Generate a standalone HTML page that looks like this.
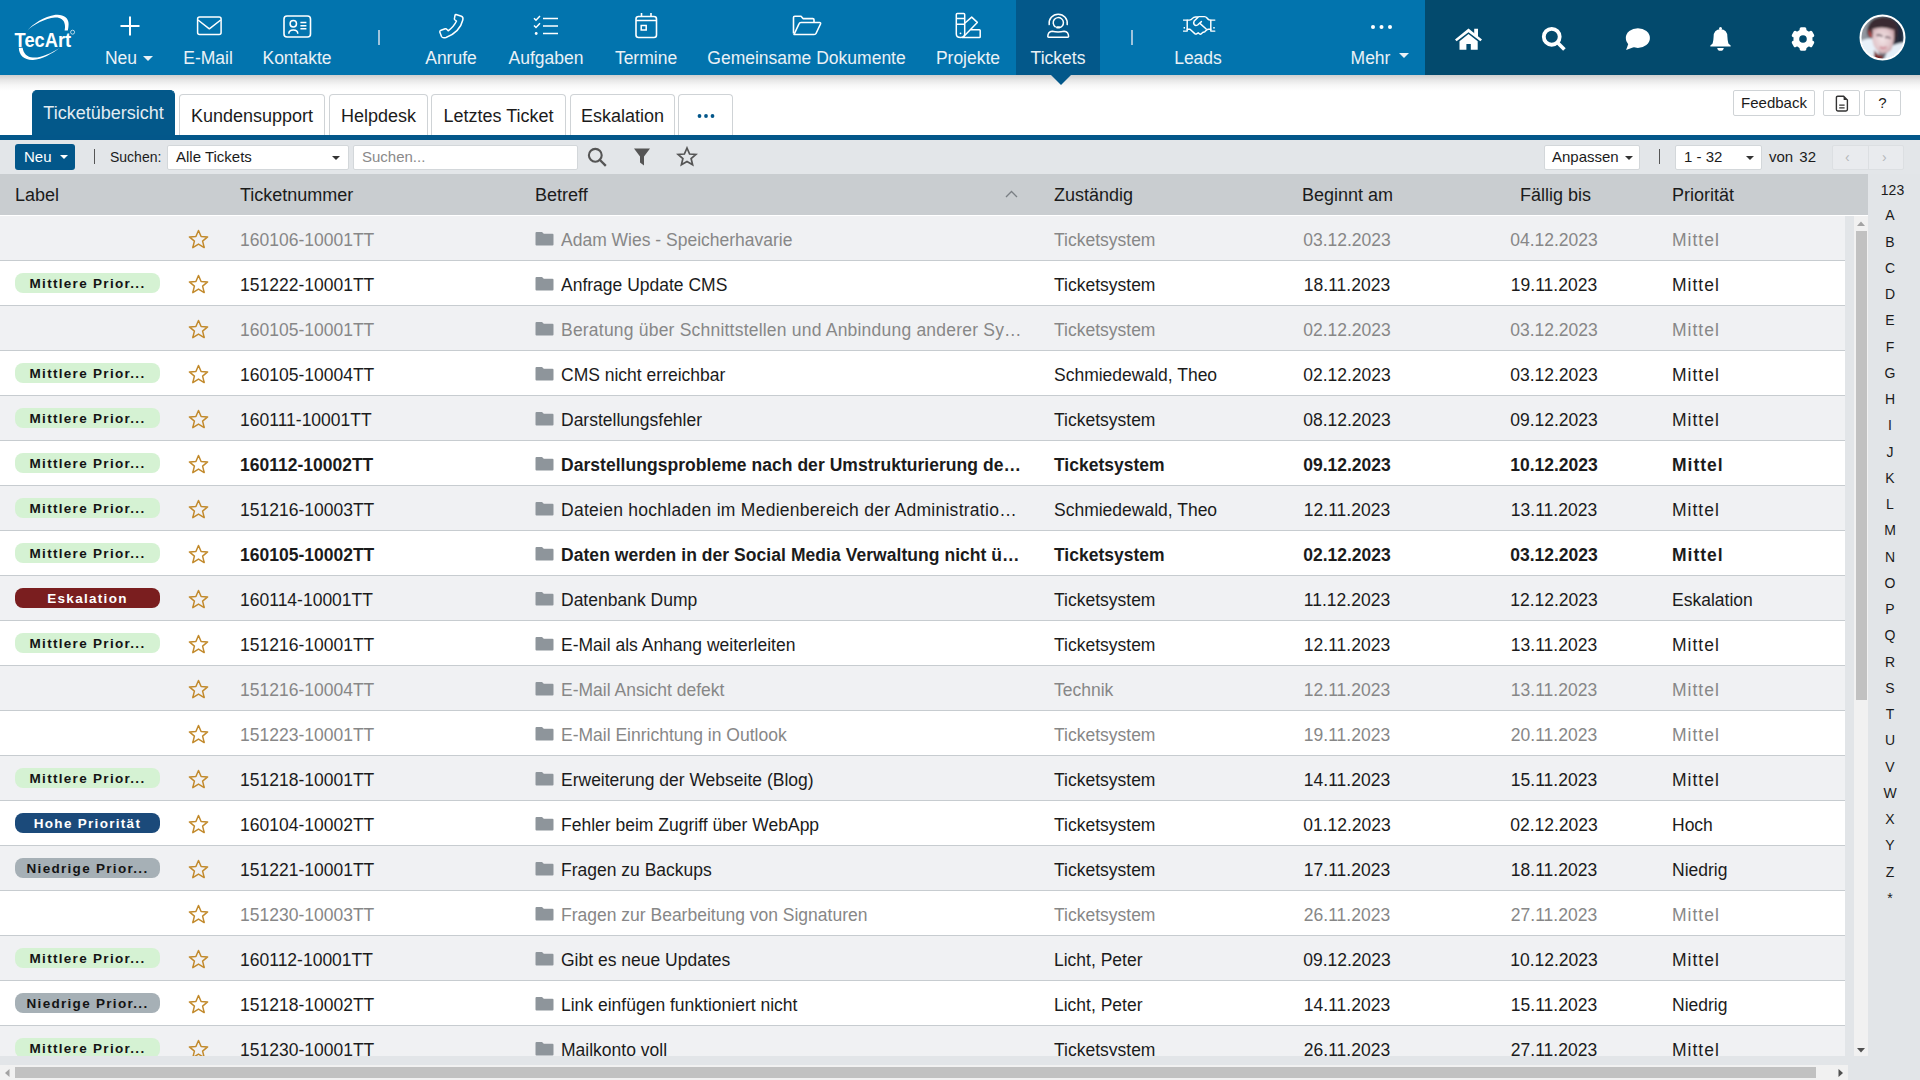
<!DOCTYPE html>
<html><head><meta charset="utf-8">
<style>
*{box-sizing:border-box;margin:0;padding:0}
html,body{width:1920px;height:1080px;overflow:hidden;background:#fff;font-family:"Liberation Sans",sans-serif;color:#1b1b1b}
.abs{position:absolute}
#nav{position:absolute;left:0;top:0;width:1920px;height:75px;background:#0274ae}
#navr{position:absolute;left:1425px;top:0;width:495px;height:75px;background:#034a6d}
#act{position:absolute;left:1016px;top:0;width:84px;height:75px;background:#03588a}
#actarr{position:absolute;left:1051px;top:75px;width:0;height:0;border-left:10px solid transparent;border-right:10px solid transparent;border-top:10px solid #03588a;z-index:3}
#shadow{position:absolute;left:0;top:75px;width:1920px;height:16px;background:linear-gradient(#cfcfcf,#e6e6e6 30%,#f7f7f7 65%,rgba(255,255,255,0));}
.ni{position:absolute;top:0;height:75px;text-align:center;color:#eaf1f6}
.ni .lb{position:absolute;left:-20px;right:-20px;top:48px;font-size:17.5px;line-height:20px;white-space:nowrap}
.ni svg{position:absolute;left:50%;top:0}
.caret{display:inline-block;width:0;height:0;border-left:5px solid transparent;border-right:5px solid transparent;border-top:5px solid currentColor;vertical-align:middle;margin-left:6px;position:relative;top:-1px}
.sep{position:absolute;width:2px;background:#9fc4dc}
/* tabs */
.tab{position:absolute;top:94px;height:41px;border:1px solid #cfd3d6;border-bottom:none;border-radius:4px 4px 0 0;background:#fff;font-size:18px;line-height:42px;text-align:center;color:#1b1b1b;white-space:nowrap}
.tab.active{top:90px;height:45px;background:#03588a;border-color:#03588a;color:#e2ecf2;line-height:44px;border-radius:5px 5px 0 0}
#bline{position:absolute;left:0;top:135px;width:1920px;height:5px;background:#03578a}
.btn{position:absolute;top:90px;height:26px;border:1px solid #cfd3d6;border-radius:2px;background:#fff;font-size:15px;line-height:24px;text-align:center;color:#1b1b1b}
/* toolbar */
#tb{position:absolute;left:0;top:140px;width:1920px;height:34px;background:#e3e6e9}
.tbt{position:absolute;font-size:14px;line-height:20px;white-space:nowrap;color:#1b1b1b}
.sel{position:absolute;top:145px;height:25px;background:#fff;border:1px solid #d3d7da;border-radius:2px;font-size:15px;line-height:22px;padding-left:8px;color:#1b1b1b;white-space:nowrap}
.sel .caret{position:absolute;right:8px;top:10px;margin:0;border-left-width:4.5px;border-right-width:4.5px;border-top-width:4.5px;color:#333}
/* header */
#th{position:absolute;left:0;top:174px;width:1868px;height:41px;background:#c9cdd0}
.hc{position:absolute;top:185px;font-size:18px;line-height:21px;white-space:nowrap;color:#1b1b1b}
#hwhite{position:absolute;left:0;top:215px;width:1868px;height:1px;background:#fff}
#alpha{position:absolute;left:1868px;top:174px;width:52px;height:906px;background:#e2e5e8}
.al{position:absolute;left:1868px;width:50px;height:20px;margin-top:-10px;text-align:center;font-size:14px;line-height:20px;color:#1b1b1b}
#gapv{position:absolute;left:1845px;top:216px;width:9px;height:849px;background:#e2e5e8}
#vtrack{position:absolute;left:1854px;top:216px;width:14px;height:843px;background:#f1f1f1}
#vthumb{position:absolute;left:1856px;top:231px;width:11px;height:469px;background:#c1c1c1}
#gaph{position:absolute;left:0;top:1056px;width:1845px;height:9px;background:#e2e5e8}
#htrack{position:absolute;left:0;top:1065px;width:1848px;height:15px;background:#f1f1f1}
#hthumb{position:absolute;left:15px;top:1067px;width:1801px;height:11px;background:#c1c1c1}
/* rows */
#rows{position:absolute;left:0;top:0;width:1845px;height:1056px;overflow:hidden}
.row{position:absolute;left:0;width:1845px;height:45px;border-bottom:1px solid #c7ccd0}
.row.odd{background:#f0f1f3}
.row.even{background:#fff}
.row .c{position:absolute;top:1.5px;height:44px;line-height:44px;font-size:17.5px;white-space:nowrap;color:#1b1b1b}
.row.g .c{color:#878787}
.row.b .c{font-weight:bold}
.c.num{left:240px}
.c.sub{left:561px;width:480px;overflow:hidden}
.c.zu{left:1054px}
.c.beg{left:1297px;width:100px;text-align:center}
.c.fal{left:1504px;width:100px;text-align:center}
.c.prio{left:1672px}
.star{position:absolute;left:188px;top:13px}
.fold{position:absolute;left:535px;top:15px}
.pill{position:absolute;left:15px;top:12px;width:145px;height:20px;border-radius:8px;font-size:13.5px;font-weight:bold;letter-spacing:1.3px;line-height:21px;text-align:center;white-space:nowrap}
.pm{background:#d5f2d3;color:#141414}
.pe{background:#7a1e1f;color:#fff}
.ph{background:#1b4a7a;color:#fff}
.pl{background:#a6b0b6;color:#141414}
</style></head><body>
<div id="nav"></div>
<div id="navr"></div>
<div id="act"></div>
<div id="shadow"></div>
<div id="actarr"></div>

<!-- logo -->
<svg class="abs" style="left:0px;top:0px" width="90" height="75" viewBox="0 0 90 75">
 <path d="M27 30.8 C33 24 44 16.5 55.5 14.8 C63 14 68.8 17.5 68.6 24 C68.5 27 68.2 29 67.8 30.6 L64.6 30.6 C65 28.5 65.2 26.5 64.8 24.5 C64 19.5 60 17.3 55 17.6 C45 18.5 34 24.5 27 30.8 Z" fill="#fff"/>
 <path d="M18.8 47.8 L22.6 47.8 C23.5 53.5 27 57.3 33 57.6 C42 58 51 53 59.8 48 C52 53.5 42 59.5 33 60 C24.5 60.3 19 55.5 18.8 47.8 Z" fill="#fff"/>
 <text x="14.6" y="46.8" font-family="Liberation Sans" font-weight="bold" font-size="19.8" fill="#fff" textLength="56.5" lengthAdjust="spacingAndGlyphs">TecArt</text>
 <circle cx="72.6" cy="32.2" r="2" fill="none" stroke="#fff" stroke-width="0.7"/>
</svg>

<!-- nav items -->
<div class="ni" style="left:89px;width:80px">
 <svg width="22" height="22" style="margin-left:-10px;top:14.8px" viewBox="0 0 22 22"><path d="M11 1.5 V20.5 M1.5 11 H20.5" stroke="#fff" stroke-width="2" fill="none"/></svg>
 <div class="lb">Neu<span class="caret"></span></div>
</div>
<div class="ni" style="left:168px;width:80px">
 <svg width="28" height="22" style="margin-left:-12.5px;top:15px" viewBox="0 0 28 22"><rect x="1.6" y="1.9" width="23.5" height="17.5" rx="2" fill="none" stroke="#fff" stroke-width="1.5"/><path d="M2 5 L13.35 13.8 L24.7 5" fill="none" stroke="#fff" stroke-width="1.5" stroke-linejoin="round"/></svg>
 <div class="lb">E-Mail</div>
</div>
<div class="ni" style="left:247px;width:100px">
 <svg width="30" height="24" style="margin-left:-14px;top:15px" viewBox="0 0 30 24"><rect x="1" y="1" width="26.5" height="21" rx="3" fill="none" stroke="#fff" stroke-width="1.6"/><circle cx="10.3" cy="8.7" r="3.2" fill="none" stroke="#fff" stroke-width="1.5"/><path d="M5.8 18.8 C5.8 13.8 14.8 13.8 14.8 18.8" fill="none" stroke="#fff" stroke-width="1.5"/><path d="M17.4 7.6 H23.4 M17.4 10.7 H23.4 M17.4 13.8 H23.4" stroke="#fff" stroke-width="1.5"/></svg>
 <div class="lb">Kontakte</div>
</div>
<div class="sep" style="left:378px;top:30px;height:15px"></div>
<div class="ni" style="left:411px;width:80px">
 <svg width="28" height="28" style="margin-left:-13px;top:12px" viewBox="0 0 28 28"><path d="M18 2.5 L23.5 4.2 Q25.5 5 24.8 8 Q22 20 8 25.5 Q4.5 26.5 3.5 24.5 L1.8 20 Q1.5 19 3 18.3 L7.2 16.8 Q8.2 16.5 9 17.5 L10.2 18.8 Q16 14.5 18.5 9 L17 8 Q16 7.2 16.5 6 L17 3.5 Q17.3 2.3 18 2.5 Z" fill="none" stroke="#fff" stroke-width="1.5" stroke-linejoin="round"/></svg>
 <div class="lb">Anrufe</div>
</div>
<div class="ni" style="left:496px;width:100px">
 <svg width="28" height="24" style="margin-left:-13px;top:14.7px" viewBox="0 0 28 24"><path d="M1 3.2 L3 5.2 L7 1 M1 10.5 L3 12.5 L7 8.3" fill="none" stroke="#fff" stroke-width="1.5"/><circle cx="3.2" cy="18.5" r="1.4" fill="#fff"/><path d="M10 3.5 H25 M10 11 H25 M10 18.5 H25" stroke="#fff" stroke-width="1.6"/></svg>
 <div class="lb">Aufgaben</div>
</div>
<div class="ni" style="left:601px;width:90px">
 <svg width="24" height="28" style="margin-left:-12px;top:12px" viewBox="0 0 24 28"><rect x="2" y="4.5" width="20.5" height="21" rx="2.5" fill="none" stroke="#fff" stroke-width="1.6"/><path d="M2 8.5 H22.5 M7.5 1 V5 M17 1 V5" stroke="#fff" stroke-width="1.6" fill="none"/><rect x="7.2" y="13.5" width="5" height="4.5" fill="none" stroke="#fff" stroke-width="1.5"/></svg>
 <div class="lb">Termine</div>
</div>
<div class="ni" style="left:700px;width:213px">
 <svg width="32" height="22" style="margin-left:-15px;top:15px" viewBox="0 0 32 22"><path d="M1.5 18.5 V2.5 Q1.5 1.2 2.8 1.2 H9 L11 3.6 H20.8 Q22 3.6 22 4.8 V7.5" fill="none" stroke="#fff" stroke-width="1.6" stroke-linejoin="round"/><path d="M2 19.5 L7 8.8 Q7.5 7.5 9 7.5 H27.5 Q29 7.5 28.5 9 L24 18.5 Q23.5 19.5 22.2 19.5 Z" fill="none" stroke="#fff" stroke-width="1.6" stroke-linejoin="round"/></svg>
 <div class="lb">Gemeinsame Dokumente</div>
</div>
<div class="ni" style="left:923px;width:90px">
 <svg width="28" height="28" style="margin-left:-14px;top:12px" viewBox="0 0 28 28"><g fill="none" stroke="#fff" stroke-width="1.5" stroke-linejoin="round"><path d="M3.3 1.6 H9.7 Q10.7 1.6 10.7 2.6 V22 Q10.7 25.5 6.5 25.5 Q2.3 25.5 2.3 22 V2.6 Q2.3 1.6 3.3 1.6 Z"/><path d="M2.3 6.6 H10.7 M2.3 12.2 H10.7"/><path d="M10.7 11.2 L17.7 5.1 L23.3 10.4 L9.5 24.8"/><path d="M16.6 17.8 H25.4 Q26.2 17.8 26.2 18.6 V24.7 Q26.2 25.5 25.4 25.5 H8"/></g><circle cx="6.5" cy="21.3" r="0.9" fill="#fff"/></svg>
 <div class="lb">Projekte</div>
</div>
<div class="ni" style="left:1016px;width:84px">
 <svg width="26" height="28" style="margin-left:-13px;top:12px" viewBox="0 0 26 28"><g fill="none" stroke="#fff" stroke-width="1.5" stroke-linecap="round" stroke-linejoin="round"><path d="M4.2 12.6 A9.1 9.1 0 1 1 22.2 12.6"/><path d="M10.3 14.8 A5.1 5.1 0 1 1 17.2 14 L15.5 15.3"/><path d="M2.8 24.6 Q2.8 19.6 7.2 19.2 Q13 20.6 19.2 19.2 Q23.6 19.6 23.6 24.6 Q23.6 25.3 22.8 25.3 H3.6 Q2.8 25.3 2.8 24.6 Z"/></g><rect x="11" y="14.3" width="4.4" height="2.2" rx="1.1" fill="#fff"/></svg>
 <div class="lb">Tickets</div>
</div>
<div class="sep" style="left:1130.5px;top:30px;height:15px"></div>
<div class="ni" style="left:1158px;width:80px">
 <svg width="34" height="22" style="margin-left:-15px;top:15px" viewBox="0 0 34 22"><g fill="none" stroke="#fff" stroke-width="1.45" stroke-linejoin="round" stroke-linecap="round"><path d="M0.6 5.1 H6.4 Q8.2 5.1 9.5 3.4 Q10.6 1.9 12.5 1.9 H15.2"/><path d="M4.2 5.1 V16.1 M0.6 16.1 H4.2"/><path d="M4.2 14.2 H7 L11.8 18.6 Q12.8 19.4 14 18.6 L15.2 17.8 L16.6 19 Q17.6 19.6 18.6 18.6 L20 17.2 Q21 17.4 22 16.6 L23.6 15 Q24.4 14.2 25.6 14.2 H27.8"/><path d="M15.8 1.6 H21.5 Q23 1.6 24 3 Q25.3 5.1 27 5.1 H31.8"/><path d="M27.8 5.1 V16.1 M27.8 16.1 H31.8"/><path d="M14.8 2.4 L11.2 6 Q10.2 7.6 11.2 9.6 Q12.6 11.2 14.6 10 L18.4 6.6"/><path d="M17.2 8.6 L23.2 14"/></g><rect x="0.6" y="12" width="1.4" height="1.6" fill="#fff"/><rect x="30.3" y="12" width="1.4" height="1.6" fill="#fff"/></svg>
 <div class="lb">Leads</div>
</div>
<div class="ni" style="left:1340px;width:80px">
 <svg width="24" height="8" style="margin-left:-10.5px;top:22.5px" viewBox="0 0 24 8"><circle cx="3" cy="4" r="2" fill="#fff"/><circle cx="11.5" cy="4" r="2" fill="#fff"/><circle cx="20" cy="4" r="2" fill="#fff"/></svg>
 <div class="lb" style="top:48px">Mehr<span class="caret" style="top:-4px;margin-left:9px"></span></div>
</div>

<!-- right icons -->
<svg class="abs" style="left:1454px;top:27px" width="30" height="24" viewBox="0 0 30 24"><g fill="#fff"><path d="M1 12.6 L14.5 1.4 L28 12.6 L26.4 14.3 L14.5 5.2 L2.6 14.3 Z"/><path d="M20.2 1.7 H24 V10.6 L20.2 7.4 Z"/><path d="M5.5 14.3 L14.5 7.1 L23.7 14.3 V22.7 H16.8 V16.9 H12.4 V22.7 H5.5 Z"/></g></svg>
<svg class="abs" style="left:1541px;top:26px" width="27" height="27" viewBox="0 0 27 27"><circle cx="10.75" cy="10.8" r="7.95" fill="none" stroke="#fff" stroke-width="3.8"/><path d="M16.2 16.2 L23.4 23.4" stroke="#fff" stroke-width="3.6" stroke-linecap="butt"/></svg>
<svg class="abs" style="left:1625px;top:27px" width="27" height="25" viewBox="0 0 27 25"><ellipse cx="12.85" cy="11.1" rx="12.05" ry="9.9" fill="#fff"/><path d="M3.8 15.5 L1.1 23 L10.5 19.5 Z" fill="#fff"/></svg>
<svg class="abs" style="left:1708px;top:26px" width="25" height="27" viewBox="0 0 25 27"><g fill="#fff"><circle cx="12.5" cy="2.4" r="1.5"/><path d="M4.6 17.6 Q5.6 13.5 5.6 10.8 Q5.6 3.6 12.5 3.3 Q19.4 3.6 19.4 10.8 Q19.4 13.5 20.4 17.6 L22.6 19.4 Q23.3 20.4 22.2 20.4 H2.8 Q1.7 20.4 2.4 19.4 Z"/><path d="M9.2 21.9 H15.8 Q15.3 24.8 12.5 24.8 Q9.7 24.8 9.2 21.9 Z"/></g></svg>
<svg class="abs" style="left:1790px;top:26px" width="26" height="26" viewBox="0 0 26 26"><g fill="#fff"><circle cx="13" cy="13" r="9.6"/><rect x="9.6" y="1.3" width="6.8" height="5" rx="1.6" transform="rotate(0 13 13)"/><rect x="9.6" y="1.3" width="6.8" height="5" rx="1.6" transform="rotate(60 13 13)"/><rect x="9.6" y="1.3" width="6.8" height="5" rx="1.6" transform="rotate(120 13 13)"/><rect x="9.6" y="1.3" width="6.8" height="5" rx="1.6" transform="rotate(180 13 13)"/><rect x="9.6" y="1.3" width="6.8" height="5" rx="1.6" transform="rotate(240 13 13)"/><rect x="9.6" y="1.3" width="6.8" height="5" rx="1.6" transform="rotate(300 13 13)"/></g><circle cx="13" cy="13" r="3.8" fill="#034a6d"/></svg>
<svg class="abs" style="left:1859px;top:14px" width="47" height="47" viewBox="0 0 47 47">
 <defs><filter id="bl" x="-10%" y="-10%" width="120%" height="120%"><feGaussianBlur stdDeviation="0.8"/></filter><clipPath id="cp"><circle cx="23.5" cy="23.5" r="21.5"/></clipPath>
 <linearGradient id="bgq" x1="0" y1="0" x2="1" y2="0"><stop offset="0" stop-color="#9aa0a8"/><stop offset="0.45" stop-color="#7c828b"/><stop offset="0.75" stop-color="#2a3344"/><stop offset="0.86" stop-color="#1e2636"/><stop offset="1" stop-color="#8fb4da"/></linearGradient>
 <radialGradient id="skin" cx="0.45" cy="0.45" r="0.65"><stop offset="0" stop-color="#f2e4e6"/><stop offset="0.6" stop-color="#e2c8cc"/><stop offset="1" stop-color="#c49aa0"/></radialGradient></defs>
 <g clip-path="url(#cp)"><g filter="url(#bl)">
  <rect x="-3" y="-3" width="53" height="53" fill="url(#bgq)"/>
  <path d="M8 18 Q9 4 23 3 Q36 3 38.5 14 Q39 24 36 30 Q34 16 25 15 Q16 15 13 24 Q9 24 8 18 Z" fill="#3b2b30"/>
  <path d="M10 15 Q8.5 19 11.5 23.5 L13.5 23 Z" fill="#c05050"/>
  <path d="M0 28 Q8 23 15 25 L21 43 L8 50 L0 50 Z" fill="#e8f1f9"/>
  <path d="M50 28 Q40 28 30 33 L23 50 H50 Z" fill="#e6eff8"/>
  <path d="M13.5 15 Q24 11.5 35 16 Q36 28 32 36 Q27 41 21.5 39 Q15 35 13.5 27 Z" fill="url(#skin)"/>
  <path d="M15 36 Q19.5 42.5 24.5 41.5 L23 47 L15 45 Z" fill="#7a2a2a"/>
  <path d="M17.5 21.5 Q20.5 20 23.5 22.5" stroke="#4a3440" stroke-width="1.4" fill="none"/>
  <path d="M26 23.5 Q29 22.5 31.5 24.5" stroke="#4a3440" stroke-width="1.4" fill="none"/>
  <path d="M21 33 Q24 35.5 27.5 33" stroke="#d08a96" stroke-width="2" fill="none"/>
 </g></g>
 <circle cx="23.5" cy="23.5" r="22" fill="none" stroke="#fff" stroke-width="2"/>
</svg>

<!-- tabs -->
<div class="tab active" style="left:32px;width:143px">Ticketübersicht</div>
<div class="tab" style="left:179px;width:146px">Kundensupport</div>
<div class="tab" style="left:329px;width:99px">Helpdesk</div>
<div class="tab" style="left:431px;width:135px">Letztes Ticket</div>
<div class="tab" style="left:570px;width:105px">Eskalation</div>
<div class="tab" style="left:678px;width:55px"><svg width="18" height="6" viewBox="0 0 18 6" style="position:absolute;left:18px;top:18px"><circle cx="2.5" cy="3" r="1.9" fill="#03578a"/><circle cx="9" cy="3" r="1.9" fill="#03578a"/><circle cx="15.5" cy="3" r="1.9" fill="#03578a"/></svg></div>
<div class="btn" style="left:1733px;width:82px">Feedback</div>
<div class="btn" style="left:1823px;width:37px"><svg width="14" height="17" viewBox="0 0 14 17" style="margin-top:4px"><path d="M2.8 1.2 H8.6 L12.4 5 V14.6 Q12.4 16 11 16 H2.8 Q1.4 16 1.4 14.6 V2.6 Q1.4 1.2 2.8 1.2 Z" fill="none" stroke="#333" stroke-width="1.4"/><path d="M8.6 1.2 L12.4 5 H8.6 Z" fill="#333"/><path d="M4.2 10.2 H9.6 M4.2 12.8 H9.6" stroke="#333" stroke-width="1.2"/></svg></div>
<div class="btn" style="left:1864px;width:37px">?</div>
<div id="bline"></div>

<!-- toolbar -->
<div id="tb"></div>
<div class="abs" style="left:15px;top:144px;width:60px;height:26px;background:#03578a;border-radius:3px;color:#fff;font-size:15px;line-height:26px;padding-left:9px">Neu<span class="caret" style="margin-left:8px;border-left-width:4.5px;border-right-width:4.5px;border-top-width:4.5px"></span></div>
<div class="sep" style="left:94px;top:149px;height:15px;width:1px;background:#555"></div>
<div class="tbt" style="left:110px;top:147px">Suchen:</div>
<div class="sel" style="left:167px;width:182px">Alle Tickets<span class="caret"></span></div>
<div class="sel" style="left:353px;width:225px;color:#8a8a8a">Suchen...</div>
<svg class="abs" style="left:586px;top:146px" width="22" height="22" viewBox="0 0 22 22"><circle cx="9.3" cy="9.3" r="6.4" fill="none" stroke="#555" stroke-width="2.1"/><path d="M14 14 L19 19" stroke="#555" stroke-width="2.3" stroke-linecap="square"/></svg>
<svg class="abs" style="left:632.5px;top:147px" width="18" height="20" viewBox="0 0 18 20"><path d="M1 1.5 H17 L11 9.5 V18.5 L7 15.5 V9.5 Z" fill="#555"/></svg>
<svg class="abs" style="left:676px;top:146px" width="22" height="22" viewBox="0 0 22 22"><path d="M11 2 L13.6 8 L20 8.4 L15.1 12.5 L16.6 18.8 L11 15.4 L5.4 18.8 L6.9 12.5 L2 8.4 L8.4 8 Z" fill="none" stroke="#555" stroke-width="1.7" stroke-linejoin="miter"/></svg>
<div class="sel" style="left:1544px;width:96px;padding-left:7px">Anpassen<span class="caret" style="right:6px"></span></div>
<div class="sep" style="left:1659px;top:149px;height:15px;width:1px;background:#555"></div>
<div class="sel" style="left:1675px;width:87px">1 - 32<span class="caret" style="right:7px"></span></div>
<div class="tbt" style="left:1769px;top:147px;font-size:15px;word-spacing:2px">von 32</div>
<div class="abs" style="left:1832px;top:145px;width:72px;height:25px;background:#e9ebee;border:1px solid #dcdfe2;border-radius:2px"></div>
<div class="abs" style="left:1868px;top:146px;width:1px;height:23px;background:#dcdfe2"></div>
<div class="abs" style="left:1845px;top:147px;font-size:14px;line-height:20px;color:#b5b8bb">‹</div>
<div class="abs" style="left:1882px;top:147px;font-size:14px;line-height:20px;color:#b5b8bb">›</div>

<!-- header -->
<div id="th"></div>
<div id="alpha"></div>
<div class="hc" style="left:15px">Label</div>
<div class="hc" style="left:240px">Ticketnummer</div>
<div class="hc" style="left:535px">Betreff</div>
<svg class="abs" style="left:1005px;top:190px" width="13" height="8" viewBox="0 0 13 8"><path d="M1 7 L6.5 1.5 L12 7" fill="none" stroke="#7a7f84" stroke-width="1.3"/></svg>
<div class="hc" style="left:1054px">Zuständig</div>
<div class="hc" style="left:1302px">Beginnt am</div>
<div class="hc" style="left:1520px">Fällig bis</div>
<div class="hc" style="left:1672px">Priorität</div>
<div id="hwhite"></div>
<div class="al" style="top:189.5px;left:1867.5px">123</div>
<div class="al" style="top:215.3px;left:1865px">A</div>
<div class="al" style="top:241.6px;left:1865px">B</div>
<div class="al" style="top:267.8px;left:1865px">C</div>
<div class="al" style="top:294.1px;left:1865px">D</div>
<div class="al" style="top:320.3px;left:1865px">E</div>
<div class="al" style="top:346.6px;left:1865px">F</div>
<div class="al" style="top:372.8px;left:1865px">G</div>
<div class="al" style="top:399.1px;left:1865px">H</div>
<div class="al" style="top:425.3px;left:1865px">I</div>
<div class="al" style="top:451.6px;left:1865px">J</div>
<div class="al" style="top:477.8px;left:1865px">K</div>
<div class="al" style="top:504.1px;left:1865px">L</div>
<div class="al" style="top:530.3px;left:1865px">M</div>
<div class="al" style="top:556.5px;left:1865px">N</div>
<div class="al" style="top:582.8px;left:1865px">O</div>
<div class="al" style="top:609.0px;left:1865px">P</div>
<div class="al" style="top:635.3px;left:1865px">Q</div>
<div class="al" style="top:661.5px;left:1865px">R</div>
<div class="al" style="top:687.8px;left:1865px">S</div>
<div class="al" style="top:714.0px;left:1865px">T</div>
<div class="al" style="top:740.3px;left:1865px">U</div>
<div class="al" style="top:766.5px;left:1865px">V</div>
<div class="al" style="top:792.8px;left:1865px">W</div>
<div class="al" style="top:819.0px;left:1865px">X</div>
<div class="al" style="top:845.3px;left:1865px">Y</div>
<div class="al" style="top:871.5px;left:1865px">Z</div>
<div class="al" style="top:897.8px;left:1865px">*</div>

<div id="rows">
<div class="row odd g" style="top:216px"><svg class="star" width="21" height="21" viewBox="0 0 21 21"><path d="M10.5 1.5 L13.1 7.5 L19.6 7.9 L14.6 12.1 L16.2 18.6 L10.5 15.1 L4.8 18.6 L6.4 12.1 L1.4 7.9 L7.9 7.5 Z" fill="none" stroke="#c28a2c" stroke-width="1.5" stroke-linejoin="round"/></svg><div class="c num">160106-10001TT</div><svg class="fold" width="19" height="15" viewBox="0 0 19 15"><path d="M1.5 1 H7 L8.8 2.8 H17.5 Q18.5 2.8 18.5 3.8 V13.5 Q18.5 14.5 17.5 14.5 H1.5 Q0.5 14.5 0.5 13.5 V2 Q0.5 1 1.5 1 Z" fill="#8e959b"/></svg><div class="c sub">Adam Wies - Speicherhavarie</div><div class="c zu">Ticketsystem</div><div class="c beg">03.12.2023</div><div class="c fal">04.12.2023</div><div class="c prio" style="letter-spacing:1px">Mittel</div></div>
<div class="row even n" style="top:261px"><div class="pill pm">Mittlere Prior...</div><svg class="star" width="21" height="21" viewBox="0 0 21 21"><path d="M10.5 1.5 L13.1 7.5 L19.6 7.9 L14.6 12.1 L16.2 18.6 L10.5 15.1 L4.8 18.6 L6.4 12.1 L1.4 7.9 L7.9 7.5 Z" fill="none" stroke="#c28a2c" stroke-width="1.5" stroke-linejoin="round"/></svg><div class="c num">151222-10001TT</div><svg class="fold" width="19" height="15" viewBox="0 0 19 15"><path d="M1.5 1 H7 L8.8 2.8 H17.5 Q18.5 2.8 18.5 3.8 V13.5 Q18.5 14.5 17.5 14.5 H1.5 Q0.5 14.5 0.5 13.5 V2 Q0.5 1 1.5 1 Z" fill="#8e959b"/></svg><div class="c sub">Anfrage Update CMS</div><div class="c zu">Ticketsystem</div><div class="c beg">18.11.2023</div><div class="c fal">19.11.2023</div><div class="c prio" style="letter-spacing:1px">Mittel</div></div>
<div class="row odd g" style="top:306px"><svg class="star" width="21" height="21" viewBox="0 0 21 21"><path d="M10.5 1.5 L13.1 7.5 L19.6 7.9 L14.6 12.1 L16.2 18.6 L10.5 15.1 L4.8 18.6 L6.4 12.1 L1.4 7.9 L7.9 7.5 Z" fill="none" stroke="#c28a2c" stroke-width="1.5" stroke-linejoin="round"/></svg><div class="c num">160105-10001TT</div><svg class="fold" width="19" height="15" viewBox="0 0 19 15"><path d="M1.5 1 H7 L8.8 2.8 H17.5 Q18.5 2.8 18.5 3.8 V13.5 Q18.5 14.5 17.5 14.5 H1.5 Q0.5 14.5 0.5 13.5 V2 Q0.5 1 1.5 1 Z" fill="#8e959b"/></svg><div class="c sub" style="letter-spacing:0.21px">Beratung über Schnittstellen und Anbindung anderer Sy…</div><div class="c zu">Ticketsystem</div><div class="c beg">02.12.2023</div><div class="c fal">03.12.2023</div><div class="c prio" style="letter-spacing:1px">Mittel</div></div>
<div class="row even n" style="top:351px"><div class="pill pm">Mittlere Prior...</div><svg class="star" width="21" height="21" viewBox="0 0 21 21"><path d="M10.5 1.5 L13.1 7.5 L19.6 7.9 L14.6 12.1 L16.2 18.6 L10.5 15.1 L4.8 18.6 L6.4 12.1 L1.4 7.9 L7.9 7.5 Z" fill="none" stroke="#c28a2c" stroke-width="1.5" stroke-linejoin="round"/></svg><div class="c num">160105-10004TT</div><svg class="fold" width="19" height="15" viewBox="0 0 19 15"><path d="M1.5 1 H7 L8.8 2.8 H17.5 Q18.5 2.8 18.5 3.8 V13.5 Q18.5 14.5 17.5 14.5 H1.5 Q0.5 14.5 0.5 13.5 V2 Q0.5 1 1.5 1 Z" fill="#8e959b"/></svg><div class="c sub">CMS nicht erreichbar</div><div class="c zu">Schmiedewald, Theo</div><div class="c beg">02.12.2023</div><div class="c fal">03.12.2023</div><div class="c prio" style="letter-spacing:1px">Mittel</div></div>
<div class="row odd n" style="top:396px"><div class="pill pm">Mittlere Prior...</div><svg class="star" width="21" height="21" viewBox="0 0 21 21"><path d="M10.5 1.5 L13.1 7.5 L19.6 7.9 L14.6 12.1 L16.2 18.6 L10.5 15.1 L4.8 18.6 L6.4 12.1 L1.4 7.9 L7.9 7.5 Z" fill="none" stroke="#c28a2c" stroke-width="1.5" stroke-linejoin="round"/></svg><div class="c num">160111-10001TT</div><svg class="fold" width="19" height="15" viewBox="0 0 19 15"><path d="M1.5 1 H7 L8.8 2.8 H17.5 Q18.5 2.8 18.5 3.8 V13.5 Q18.5 14.5 17.5 14.5 H1.5 Q0.5 14.5 0.5 13.5 V2 Q0.5 1 1.5 1 Z" fill="#8e959b"/></svg><div class="c sub">Darstellungsfehler</div><div class="c zu">Ticketsystem</div><div class="c beg">08.12.2023</div><div class="c fal">09.12.2023</div><div class="c prio" style="letter-spacing:1px">Mittel</div></div>
<div class="row even b" style="top:441px"><div class="pill pm">Mittlere Prior...</div><svg class="star" width="21" height="21" viewBox="0 0 21 21"><path d="M10.5 1.5 L13.1 7.5 L19.6 7.9 L14.6 12.1 L16.2 18.6 L10.5 15.1 L4.8 18.6 L6.4 12.1 L1.4 7.9 L7.9 7.5 Z" fill="none" stroke="#c28a2c" stroke-width="1.5" stroke-linejoin="round"/></svg><div class="c num">160112-10002TT</div><svg class="fold" width="19" height="15" viewBox="0 0 19 15"><path d="M1.5 1 H7 L8.8 2.8 H17.5 Q18.5 2.8 18.5 3.8 V13.5 Q18.5 14.5 17.5 14.5 H1.5 Q0.5 14.5 0.5 13.5 V2 Q0.5 1 1.5 1 Z" fill="#8e959b"/></svg><div class="c sub" style="letter-spacing:0.04px">Darstellungsprobleme nach der Umstrukturierung de…</div><div class="c zu">Ticketsystem</div><div class="c beg">09.12.2023</div><div class="c fal">10.12.2023</div><div class="c prio" style="letter-spacing:1px">Mittel</div></div>
<div class="row odd n" style="top:486px"><div class="pill pm">Mittlere Prior...</div><svg class="star" width="21" height="21" viewBox="0 0 21 21"><path d="M10.5 1.5 L13.1 7.5 L19.6 7.9 L14.6 12.1 L16.2 18.6 L10.5 15.1 L4.8 18.6 L6.4 12.1 L1.4 7.9 L7.9 7.5 Z" fill="none" stroke="#c28a2c" stroke-width="1.5" stroke-linejoin="round"/></svg><div class="c num">151216-10003TT</div><svg class="fold" width="19" height="15" viewBox="0 0 19 15"><path d="M1.5 1 H7 L8.8 2.8 H17.5 Q18.5 2.8 18.5 3.8 V13.5 Q18.5 14.5 17.5 14.5 H1.5 Q0.5 14.5 0.5 13.5 V2 Q0.5 1 1.5 1 Z" fill="#8e959b"/></svg><div class="c sub" style="letter-spacing:0.27px">Dateien hochladen im Medienbereich der Administratio…</div><div class="c zu">Schmiedewald, Theo</div><div class="c beg">12.11.2023</div><div class="c fal">13.11.2023</div><div class="c prio" style="letter-spacing:1px">Mittel</div></div>
<div class="row even b" style="top:531px"><div class="pill pm">Mittlere Prior...</div><svg class="star" width="21" height="21" viewBox="0 0 21 21"><path d="M10.5 1.5 L13.1 7.5 L19.6 7.9 L14.6 12.1 L16.2 18.6 L10.5 15.1 L4.8 18.6 L6.4 12.1 L1.4 7.9 L7.9 7.5 Z" fill="none" stroke="#c28a2c" stroke-width="1.5" stroke-linejoin="round"/></svg><div class="c num">160105-10002TT</div><svg class="fold" width="19" height="15" viewBox="0 0 19 15"><path d="M1.5 1 H7 L8.8 2.8 H17.5 Q18.5 2.8 18.5 3.8 V13.5 Q18.5 14.5 17.5 14.5 H1.5 Q0.5 14.5 0.5 13.5 V2 Q0.5 1 1.5 1 Z" fill="#8e959b"/></svg><div class="c sub" style="letter-spacing:0.05px">Daten werden in der Social Media Verwaltung nicht ü…</div><div class="c zu">Ticketsystem</div><div class="c beg">02.12.2023</div><div class="c fal">03.12.2023</div><div class="c prio" style="letter-spacing:1px">Mittel</div></div>
<div class="row odd n" style="top:576px"><div class="pill pe">Eskalation</div><svg class="star" width="21" height="21" viewBox="0 0 21 21"><path d="M10.5 1.5 L13.1 7.5 L19.6 7.9 L14.6 12.1 L16.2 18.6 L10.5 15.1 L4.8 18.6 L6.4 12.1 L1.4 7.9 L7.9 7.5 Z" fill="none" stroke="#c28a2c" stroke-width="1.5" stroke-linejoin="round"/></svg><div class="c num">160114-10001TT</div><svg class="fold" width="19" height="15" viewBox="0 0 19 15"><path d="M1.5 1 H7 L8.8 2.8 H17.5 Q18.5 2.8 18.5 3.8 V13.5 Q18.5 14.5 17.5 14.5 H1.5 Q0.5 14.5 0.5 13.5 V2 Q0.5 1 1.5 1 Z" fill="#8e959b"/></svg><div class="c sub">Datenbank Dump</div><div class="c zu">Ticketsystem</div><div class="c beg">11.12.2023</div><div class="c fal">12.12.2023</div><div class="c prio">Eskalation</div></div>
<div class="row even n" style="top:621px"><div class="pill pm">Mittlere Prior...</div><svg class="star" width="21" height="21" viewBox="0 0 21 21"><path d="M10.5 1.5 L13.1 7.5 L19.6 7.9 L14.6 12.1 L16.2 18.6 L10.5 15.1 L4.8 18.6 L6.4 12.1 L1.4 7.9 L7.9 7.5 Z" fill="none" stroke="#c28a2c" stroke-width="1.5" stroke-linejoin="round"/></svg><div class="c num">151216-10001TT</div><svg class="fold" width="19" height="15" viewBox="0 0 19 15"><path d="M1.5 1 H7 L8.8 2.8 H17.5 Q18.5 2.8 18.5 3.8 V13.5 Q18.5 14.5 17.5 14.5 H1.5 Q0.5 14.5 0.5 13.5 V2 Q0.5 1 1.5 1 Z" fill="#8e959b"/></svg><div class="c sub">E-Mail als Anhang weiterleiten</div><div class="c zu">Ticketsystem</div><div class="c beg">12.11.2023</div><div class="c fal">13.11.2023</div><div class="c prio" style="letter-spacing:1px">Mittel</div></div>
<div class="row odd g" style="top:666px"><svg class="star" width="21" height="21" viewBox="0 0 21 21"><path d="M10.5 1.5 L13.1 7.5 L19.6 7.9 L14.6 12.1 L16.2 18.6 L10.5 15.1 L4.8 18.6 L6.4 12.1 L1.4 7.9 L7.9 7.5 Z" fill="none" stroke="#c28a2c" stroke-width="1.5" stroke-linejoin="round"/></svg><div class="c num">151216-10004TT</div><svg class="fold" width="19" height="15" viewBox="0 0 19 15"><path d="M1.5 1 H7 L8.8 2.8 H17.5 Q18.5 2.8 18.5 3.8 V13.5 Q18.5 14.5 17.5 14.5 H1.5 Q0.5 14.5 0.5 13.5 V2 Q0.5 1 1.5 1 Z" fill="#8e959b"/></svg><div class="c sub">E-Mail Ansicht defekt</div><div class="c zu">Technik</div><div class="c beg">12.11.2023</div><div class="c fal">13.11.2023</div><div class="c prio" style="letter-spacing:1px">Mittel</div></div>
<div class="row even g" style="top:711px"><svg class="star" width="21" height="21" viewBox="0 0 21 21"><path d="M10.5 1.5 L13.1 7.5 L19.6 7.9 L14.6 12.1 L16.2 18.6 L10.5 15.1 L4.8 18.6 L6.4 12.1 L1.4 7.9 L7.9 7.5 Z" fill="none" stroke="#c28a2c" stroke-width="1.5" stroke-linejoin="round"/></svg><div class="c num">151223-10001TT</div><svg class="fold" width="19" height="15" viewBox="0 0 19 15"><path d="M1.5 1 H7 L8.8 2.8 H17.5 Q18.5 2.8 18.5 3.8 V13.5 Q18.5 14.5 17.5 14.5 H1.5 Q0.5 14.5 0.5 13.5 V2 Q0.5 1 1.5 1 Z" fill="#8e959b"/></svg><div class="c sub">E-Mail Einrichtung in Outlook</div><div class="c zu">Ticketsystem</div><div class="c beg">19.11.2023</div><div class="c fal">20.11.2023</div><div class="c prio" style="letter-spacing:1px">Mittel</div></div>
<div class="row odd n" style="top:756px"><div class="pill pm">Mittlere Prior...</div><svg class="star" width="21" height="21" viewBox="0 0 21 21"><path d="M10.5 1.5 L13.1 7.5 L19.6 7.9 L14.6 12.1 L16.2 18.6 L10.5 15.1 L4.8 18.6 L6.4 12.1 L1.4 7.9 L7.9 7.5 Z" fill="none" stroke="#c28a2c" stroke-width="1.5" stroke-linejoin="round"/></svg><div class="c num">151218-10001TT</div><svg class="fold" width="19" height="15" viewBox="0 0 19 15"><path d="M1.5 1 H7 L8.8 2.8 H17.5 Q18.5 2.8 18.5 3.8 V13.5 Q18.5 14.5 17.5 14.5 H1.5 Q0.5 14.5 0.5 13.5 V2 Q0.5 1 1.5 1 Z" fill="#8e959b"/></svg><div class="c sub">Erweiterung der Webseite (Blog)</div><div class="c zu">Ticketsystem</div><div class="c beg">14.11.2023</div><div class="c fal">15.11.2023</div><div class="c prio" style="letter-spacing:1px">Mittel</div></div>
<div class="row even n" style="top:801px"><div class="pill ph">Hohe Priorität</div><svg class="star" width="21" height="21" viewBox="0 0 21 21"><path d="M10.5 1.5 L13.1 7.5 L19.6 7.9 L14.6 12.1 L16.2 18.6 L10.5 15.1 L4.8 18.6 L6.4 12.1 L1.4 7.9 L7.9 7.5 Z" fill="none" stroke="#c28a2c" stroke-width="1.5" stroke-linejoin="round"/></svg><div class="c num">160104-10002TT</div><svg class="fold" width="19" height="15" viewBox="0 0 19 15"><path d="M1.5 1 H7 L8.8 2.8 H17.5 Q18.5 2.8 18.5 3.8 V13.5 Q18.5 14.5 17.5 14.5 H1.5 Q0.5 14.5 0.5 13.5 V2 Q0.5 1 1.5 1 Z" fill="#8e959b"/></svg><div class="c sub">Fehler beim Zugriff über WebApp</div><div class="c zu">Ticketsystem</div><div class="c beg">01.12.2023</div><div class="c fal">02.12.2023</div><div class="c prio">Hoch</div></div>
<div class="row odd n" style="top:846px"><div class="pill pl">Niedrige Prior...</div><svg class="star" width="21" height="21" viewBox="0 0 21 21"><path d="M10.5 1.5 L13.1 7.5 L19.6 7.9 L14.6 12.1 L16.2 18.6 L10.5 15.1 L4.8 18.6 L6.4 12.1 L1.4 7.9 L7.9 7.5 Z" fill="none" stroke="#c28a2c" stroke-width="1.5" stroke-linejoin="round"/></svg><div class="c num">151221-10001TT</div><svg class="fold" width="19" height="15" viewBox="0 0 19 15"><path d="M1.5 1 H7 L8.8 2.8 H17.5 Q18.5 2.8 18.5 3.8 V13.5 Q18.5 14.5 17.5 14.5 H1.5 Q0.5 14.5 0.5 13.5 V2 Q0.5 1 1.5 1 Z" fill="#8e959b"/></svg><div class="c sub">Fragen zu Backups</div><div class="c zu">Ticketsystem</div><div class="c beg">17.11.2023</div><div class="c fal">18.11.2023</div><div class="c prio">Niedrig</div></div>
<div class="row even g" style="top:891px"><svg class="star" width="21" height="21" viewBox="0 0 21 21"><path d="M10.5 1.5 L13.1 7.5 L19.6 7.9 L14.6 12.1 L16.2 18.6 L10.5 15.1 L4.8 18.6 L6.4 12.1 L1.4 7.9 L7.9 7.5 Z" fill="none" stroke="#c28a2c" stroke-width="1.5" stroke-linejoin="round"/></svg><div class="c num">151230-10003TT</div><svg class="fold" width="19" height="15" viewBox="0 0 19 15"><path d="M1.5 1 H7 L8.8 2.8 H17.5 Q18.5 2.8 18.5 3.8 V13.5 Q18.5 14.5 17.5 14.5 H1.5 Q0.5 14.5 0.5 13.5 V2 Q0.5 1 1.5 1 Z" fill="#8e959b"/></svg><div class="c sub">Fragen zur Bearbeitung von Signaturen</div><div class="c zu">Ticketsystem</div><div class="c beg">26.11.2023</div><div class="c fal">27.11.2023</div><div class="c prio" style="letter-spacing:1px">Mittel</div></div>
<div class="row odd n" style="top:936px"><div class="pill pm">Mittlere Prior...</div><svg class="star" width="21" height="21" viewBox="0 0 21 21"><path d="M10.5 1.5 L13.1 7.5 L19.6 7.9 L14.6 12.1 L16.2 18.6 L10.5 15.1 L4.8 18.6 L6.4 12.1 L1.4 7.9 L7.9 7.5 Z" fill="none" stroke="#c28a2c" stroke-width="1.5" stroke-linejoin="round"/></svg><div class="c num">160112-10001TT</div><svg class="fold" width="19" height="15" viewBox="0 0 19 15"><path d="M1.5 1 H7 L8.8 2.8 H17.5 Q18.5 2.8 18.5 3.8 V13.5 Q18.5 14.5 17.5 14.5 H1.5 Q0.5 14.5 0.5 13.5 V2 Q0.5 1 1.5 1 Z" fill="#8e959b"/></svg><div class="c sub">Gibt es neue Updates</div><div class="c zu">Licht, Peter</div><div class="c beg">09.12.2023</div><div class="c fal">10.12.2023</div><div class="c prio" style="letter-spacing:1px">Mittel</div></div>
<div class="row even n" style="top:981px"><div class="pill pl">Niedrige Prior...</div><svg class="star" width="21" height="21" viewBox="0 0 21 21"><path d="M10.5 1.5 L13.1 7.5 L19.6 7.9 L14.6 12.1 L16.2 18.6 L10.5 15.1 L4.8 18.6 L6.4 12.1 L1.4 7.9 L7.9 7.5 Z" fill="none" stroke="#c28a2c" stroke-width="1.5" stroke-linejoin="round"/></svg><div class="c num">151218-10002TT</div><svg class="fold" width="19" height="15" viewBox="0 0 19 15"><path d="M1.5 1 H7 L8.8 2.8 H17.5 Q18.5 2.8 18.5 3.8 V13.5 Q18.5 14.5 17.5 14.5 H1.5 Q0.5 14.5 0.5 13.5 V2 Q0.5 1 1.5 1 Z" fill="#8e959b"/></svg><div class="c sub">Link einfügen funktioniert nicht</div><div class="c zu">Licht, Peter</div><div class="c beg">14.11.2023</div><div class="c fal">15.11.2023</div><div class="c prio">Niedrig</div></div>
<div class="row odd n" style="top:1026px"><div class="pill pm">Mittlere Prior...</div><svg class="star" width="21" height="21" viewBox="0 0 21 21"><path d="M10.5 1.5 L13.1 7.5 L19.6 7.9 L14.6 12.1 L16.2 18.6 L10.5 15.1 L4.8 18.6 L6.4 12.1 L1.4 7.9 L7.9 7.5 Z" fill="none" stroke="#c28a2c" stroke-width="1.5" stroke-linejoin="round"/></svg><div class="c num">151230-10001TT</div><svg class="fold" width="19" height="15" viewBox="0 0 19 15"><path d="M1.5 1 H7 L8.8 2.8 H17.5 Q18.5 2.8 18.5 3.8 V13.5 Q18.5 14.5 17.5 14.5 H1.5 Q0.5 14.5 0.5 13.5 V2 Q0.5 1 1.5 1 Z" fill="#8e959b"/></svg><div class="c sub">Mailkonto voll</div><div class="c zu">Ticketsystem</div><div class="c beg">26.11.2023</div><div class="c fal">27.11.2023</div><div class="c prio" style="letter-spacing:1px">Mittel</div></div>
</div>
<div id="gapv"></div>
<div id="vtrack"></div>
<div id="vthumb"></div>
<svg class="abs" style="left:1856px;top:220px" width="10" height="7" viewBox="0 0 10 7"><path d="M1 6 L5 1.5 L9 6 Z" fill="#a3a3a3"/></svg>
<svg class="abs" style="left:1856px;top:1047px" width="10" height="7" viewBox="0 0 10 7"><path d="M1 1 L5 5.5 L9 1 Z" fill="#505050"/></svg>
<div class="abs" style="left:1845px;top:1056px;width:23px;height:24px;background:#e2e5e8"></div>
<div id="gaph"></div>
<div id="htrack"></div>
<div id="hthumb"></div>
<svg class="abs" style="left:3px;top:1068px" width="8" height="10" viewBox="0 0 8 10"><path d="M6.5 1 L2 5 L6.5 9 Z" fill="#a3a3a3"/></svg>
<svg class="abs" style="left:1837px;top:1068px" width="8" height="10" viewBox="0 0 8 10"><path d="M1.5 1 L6 5 L1.5 9 Z" fill="#505050"/></svg>
</body></html>
